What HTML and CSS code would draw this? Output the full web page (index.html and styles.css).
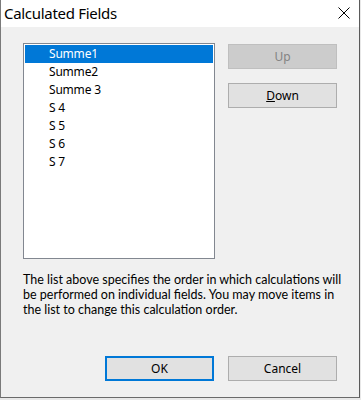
FILE: index.html
```html
<!DOCTYPE html>
<html>
<head>
<meta charset="utf-8">
<link rel="stylesheet" href="styles.css">
</head>
<body>
<div class="window">
  <div class="titlebar">
    <span class="title">Calculated Fields</span>
    <svg class="close" width="12" height="12" viewBox="0 0 12 12"><path d="M0.5 0.5 L11.5 11.5 M11.5 0.5 L0.5 11.5" stroke="#000" stroke-width="1"/></svg>
  </div>
  <div class="body">
    <div class="top">
      <div class="listbox">
        <div class="item selected">Summe1</div>
        <div class="item">Summe2</div>
        <div class="item">Summe 3</div>
        <div class="item">S 4</div>
        <div class="item">S 5</div>
        <div class="item">S 6</div>
        <div class="item">S 7</div>
      </div>
      <div class="side">
        <div class="btn disabled">Up</div>
        <div class="btn"><u>D</u>own</div>
      </div>
    </div>
    <div class="desc">
      <div class="line">The list above specifies the order in which calculations will</div>
      <div class="line">be performed on individual fields. You may move items in</div>
      <div class="line">the list to change this calculation order.</div>
    </div>
    <div class="actions">
      <div class="btn default">OK</div>
      <div class="btn">Cancel</div>
    </div>
  </div>
</div>
</body>
</html>
```
FILE: styles.css
```css
html, body {
  margin: 0;
  padding: 0;
  background: #e8e8e8;
}
body {
  width: 361px;
  height: 400px;
  overflow: hidden;
  font-family: "Noto Sans", "Open Sans", sans-serif;
  font-size: 12px;
  color: #000;
}
.window {
  box-sizing: border-box;
  width: 360px;
  height: 398px;
  border-left: 1px solid #7a7a7a;
  border-right: 1px solid #5a5a5a;
  border-bottom: 1px solid #6a6a6a;
  background: #f0f0f0;
  display: flex;
  flex-direction: column;
}
.titlebar {
  height: 27px;
  background: #fff;
  display: flex;
  align-items: center;
  justify-content: space-between;
  padding: 0 9px 0 3px;
  flex: none;
}
.title {
  font-size: 15px;
  letter-spacing: -0.3px;
  position: relative;
  top: -1px;
}
.close {
  display: block;
  margin-top: -1px;
}
.body {
  padding: 16px 22px 0 22px;
  display: flex;
  flex-direction: column;
}
.top {
  display: flex;
  gap: 13px;
}
.listbox {
  box-sizing: border-box;
  width: 192px;
  height: 216px;
  border: 1px solid #828790;
  background: #fff;
  padding: 1px;
}
.item {
  height: 18px;
  line-height: 18px;
  padding-left: 24px;
  letter-spacing: -0.2px;
}
.item.selected {
  background: #0078d7;
  color: #fff;
}
.side {
  display: flex;
  flex-direction: column;
  gap: 14px;
  padding-top: 1px;
}
.btn {
  box-sizing: border-box;
  width: 109px;
  height: 25px;
  background: #e1e1e1;
  border: 1px solid #adadad;
  display: flex;
  align-items: center;
  justify-content: center;
}
.btn.disabled {
  background: #cccccc;
  border-color: #bfbfbf;
  color: #838383;
}
.btn.default {
  border: 2px solid #0078d7;
}
.desc {
  margin-top: 13px;
  font-family: "Lato", "Noto Sans", sans-serif;
  font-size: 12.5px;
}
.line {
  height: 15px;
  line-height: 15px;
  white-space: nowrap;
}
.actions {
  display: flex;
  justify-content: flex-end;
  gap: 14px;
  margin-top: 39px;
  width: 314px;
}
```
